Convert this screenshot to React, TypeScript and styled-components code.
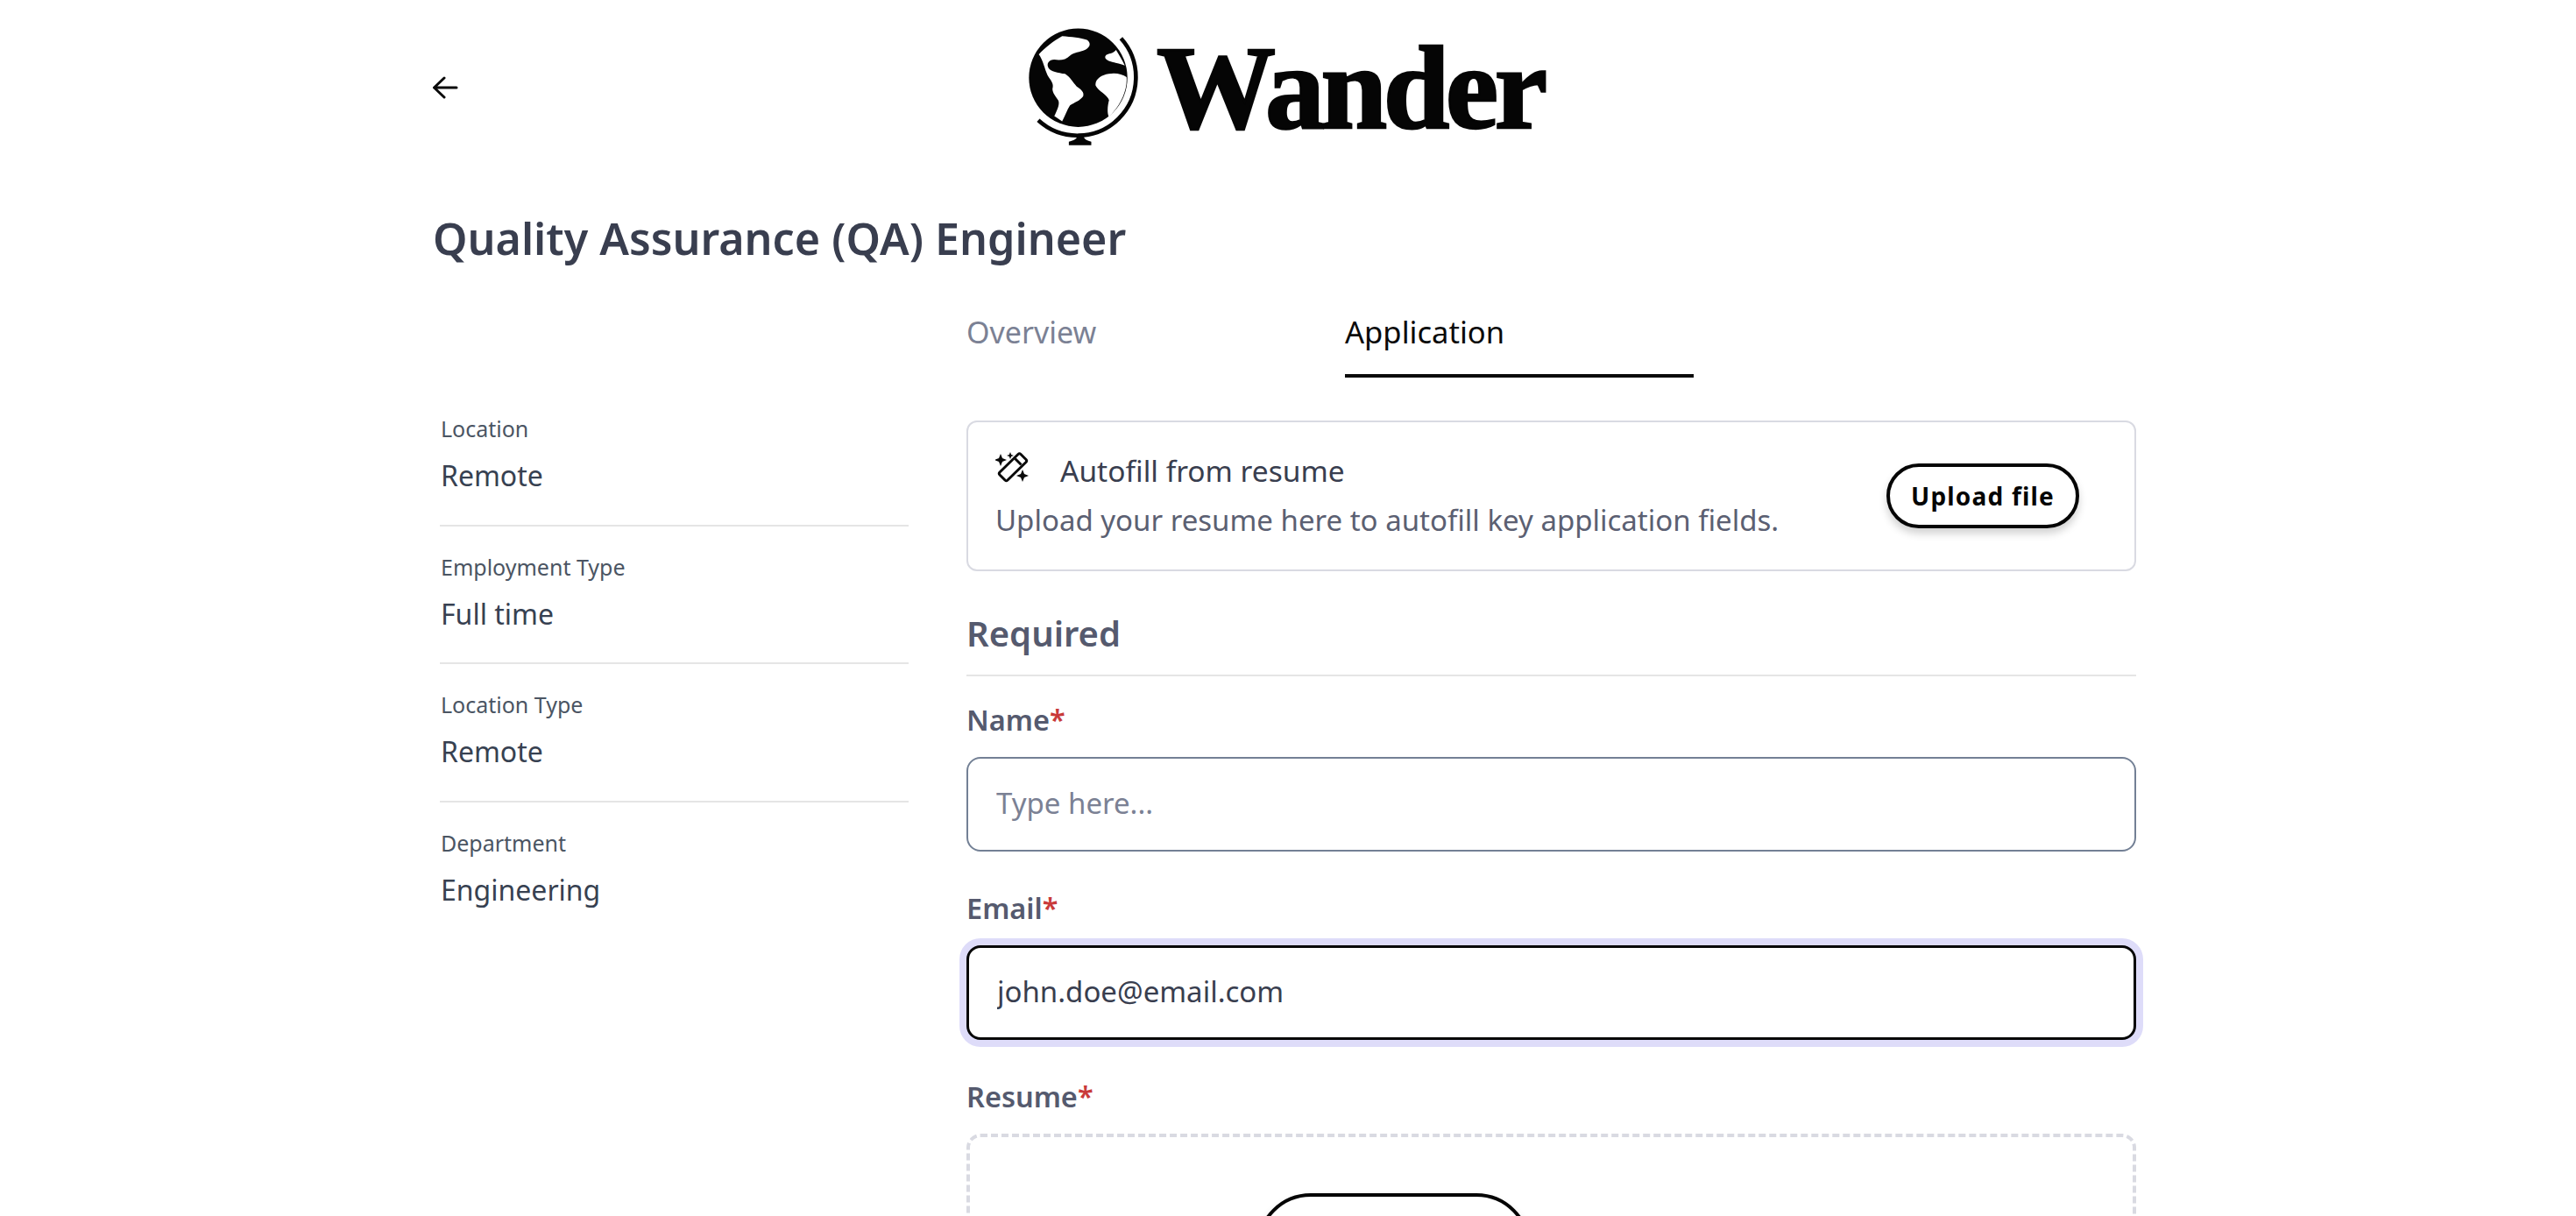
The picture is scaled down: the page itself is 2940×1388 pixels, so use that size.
import styled, { createGlobalStyle } from "styled-components";

const GlobalStyle = createGlobalStyle`
  html, body {
    margin: 0;
    height: 100%;
    overflow: hidden;
    background: #fff;
  }
  * {
    box-sizing: border-box;
  }
`;

const Globe = () => (
  <svg width="128" height="135" viewBox="70 38 385 405" fill="none">
    <circle cx="240" cy="208" r="169" fill="#050505" />
    <path
      d="M185 65 C215 68 250 70 270 78 C285 88 282 102 265 112 C245 120 225 122 212 132 C198 146 180 150 158 146 C140 146 130 160 138 174 C146 188 170 190 195 195 C212 205 222 225 235 238 C250 248 262 258 257 272 C245 288 228 292 212 303 C202 318 195 340 185 358 C176 352 168 346 158 340 C166 322 178 300 172 286 C160 268 148 256 153 240 C155 226 145 216 135 200 C125 178 120 150 105 128 C125 105 155 82 185 65 Z"
      fill="#fff"
    />
    <path
      d="M370 113 C380 130 392 148 400 166 C380 160 360 155 345 150 C335 146 330 140 334 133 C340 124 358 128 370 113 Z"
      fill="#fff"
    />
    <path
      d="M345 195 C368 190 392 196 406 206 C410 250 385 305 345 342 C338 325 342 300 346 285 C340 265 310 255 300 235 C296 215 320 198 345 195 Z"
      fill="#fff"
    />
    <path
      d="M387 73 A 200 200 0 0 1 103 354"
      stroke="#050505"
      strokeWidth="14"
    />
    <path
      d="M238 404 H258 C258 415 264 423 285 428 V440 H208 V428 C230 423 238 415 238 404 Z"
      fill="#050505"
    />
  </svg>
);

const BackArrow = () => (
  <svg width="30" height="26" viewBox="0 0 30 26" fill="none">
    <path
      d="M2.5 13 H28 M14 2 L2.5 13 L14 24"
      stroke="#0a0a0a"
      strokeWidth="3"
      strokeLinecap="round"
      strokeLinejoin="round"
    />
  </svg>
);

const WandIcon = () => (
  <WandSvg width="40" height="40" viewBox="0 0 40 40" fill="none">
    <path
      d="M29 2.5 L35 8.5 a2.2 2.2 0 0 1 0 3 L14 32 a2.2 2.2 0 0 1 -3 0 L5 26 a2.2 2.2 0 0 1 0 -3 L26 2.5 a2.2 2.2 0 0 1 3 0 Z"
      stroke="#0a0a0a"
      strokeWidth="3"
      strokeLinejoin="round"
    />
    <path d="M22.5 7.5 L29.5 14.5" stroke="#0a0a0a" strokeWidth="3" />
    <path
      d="M6 2 L8 7 L13 9 L8 11 L6 16 L4 11 L-1 9 L4 7 Z"
      fill="#0a0a0a"
    />
    <path
      d="M17 0 L18.2 3 L21 4 L18.2 5 L17 8 L15.8 5 L13 4 L15.8 3 Z"
      fill="#0a0a0a"
    />
    <path
      d="M31 20 L33 25 L38 27 L33 29 L31 34 L29 29 L24 27 L29 25 Z"
      fill="#0a0a0a"
    />
  </WandSvg>
);

const DETAILS = [
  { label: "Location", value: "Remote" },
  { label: "Employment Type", value: "Full time" },
  { label: "Location Type", value: "Remote" },
  { label: "Department", value: "Engineering" },
];

export default function App() {
  return (
    <Page>
      <GlobalStyle />
      <Header>
        <BackButton>
          <BackArrow />
        </BackButton>
        <Logo>
          <Globe />
          <Wordmark>Wander</Wordmark>
        </Logo>
      </Header>
      <Title>Quality Assurance (QA) Engineer</Title>
      <Columns>
        <Sidebar>
          {DETAILS.map((d) => (
            <Detail key={d.label}>
              <DetailLabel>{d.label}</DetailLabel>
              <DetailValue>{d.value}</DetailValue>
            </Detail>
          ))}
        </Sidebar>
        <Main>
          <Tabs>
            <Tab>Overview</Tab>
            <Tab $active>Application</Tab>
          </Tabs>
          <AutofillCard>
            <div>
              <AutofillTitle>
                <WandIcon />
                <span>Autofill from resume</span>
              </AutofillTitle>
              <AutofillText>
                Upload your resume here to autofill key application fields.
              </AutofillText>
            </div>
            <PillButton>Upload file</PillButton>
          </AutofillCard>
          <SectionTitle>Required</SectionTitle>
          <Field>
            <FieldLabel>
              Name<Star>*</Star>
            </FieldLabel>
            <TextInput placeholder="Type here..." readOnly />
          </Field>
          <Field>
            <FieldLabel>
              Email<Star>*</Star>
            </FieldLabel>
            <TextInput $focused value="john.doe@email.com" readOnly />
          </Field>
          <Field>
            <FieldLabel>
              Resume<Star>*</Star>
            </FieldLabel>
            <DropZone>
              <DropButton aria-label="Upload file" />
            </DropZone>
          </Field>
        </Main>
      </Columns>
    </Page>
  );
}

const FONT = `"Noto Sans", "Open Sans", sans-serif`;

const Page = styled.div`
  width: 1976px;
  margin: 0 auto;
  padding: 32px 0 0 12px;
  font-family: ${FONT};
  color: #374151;
  height: 1388px;
  overflow: hidden;
`;

const Header = styled.header`
  position: relative;
  display: flex;
  justify-content: center;
  height: 136px;
  padding-right: 10px;
`;

const BackButton = styled.button`
  position: absolute;
  left: -1px;
  top: 55px;
  display: flex;
  padding: 0;
  border: 0;
  background: none;
`;

const Logo = styled.div`
  display: flex;
  align-items: flex-start;
  gap: 18px;
`;

const Wordmark = styled.span`
  width: 448px;
  font-family: "Liberation Serif", serif;
  font-weight: 700;
  font-size: 136px;
  line-height: 136px;
  letter-spacing: -4.5px;
  color: #050505;
  -webkit-text-stroke: 2.5px #050505;
`;

const Title = styled.h1`
  margin: 70px 0 0;
  font-size: 50.2px;
  line-height: 68px;
  font-weight: 600;
  color: #393e4f;
`;

const Columns = styled.div`
  display: grid;
  grid-template-columns: 543px 1335px;
  column-gap: 66px;
  margin-top: 49px;
`;

const Sidebar = styled.aside`
  padding: 88px 0 0 8px;
`;

const Detail = styled.div`
  height: 157.5px;
  padding: 28px 0 0 1px;
  border-bottom: 2px solid #e5e5e5;
  &:last-child {
    border-bottom: 0;
  }
`;

const DetailLabel = styled.div`
  font-size: 25px;
  line-height: 36px;
  color: #4b5563;
`;

const DetailValue = styled.div`
  font-size: 32px;
  line-height: 48px;
  color: #374151;
  margin-top: 12px;
`;

const Main = styled.main`
  min-width: 0;
`;

const Tabs = styled.nav`
  display: flex;
  gap: 34px;
`;

const Tab = styled.div<{ $active?: boolean }>`
  width: 398px;
  height: 76px;
  font-size: ${(p) => (p.$active ? "34.6px" : "34px")};
  line-height: 48px;
  color: ${(p) => (p.$active ? "#0a0a0a" : "#7b8194")};
  border-bottom: ${(p) => (p.$active ? "4px solid #0a0a0a" : "0")};
`;

const AutofillCard = styled.section`
  display: flex;
  align-items: center;
  justify-content: space-between;
  height: 172px;
  margin-top: 49px;
  padding: 0 63px 0 31px;
  border: 2px solid #d9dae2;
  border-radius: 12px;
`;

const AutofillTitle = styled.div`
  display: flex;
  align-items: center;
  gap: 34px;
  font-size: 33.5px;
  line-height: 44px;
  color: #393e4f;
`;

const WandSvg = styled.svg`
  flex: none;
  margin-top: -2px;
`;

const AutofillText = styled.div`
  margin-top: 11px;
  font-size: 33px;
  line-height: 48px;
  color: #5b6072;
`;

const PillButton = styled.button`
  height: 74px;
  padding: 0 24px;
  border: 4px solid #050505;
  border-radius: 999px;
  background: #fff;
  box-shadow: 0 6px 10px rgba(0, 0, 0, 0.18);
  font-family: ${FONT};
  font-size: 28px;
  font-weight: 700;
  letter-spacing: 1.2px;
  color: #050505;
`;

const SectionTitle = styled.h2`
  margin: 42px 0 0;
  padding-bottom: 18px;
  font-size: 40px;
  line-height: 58px;
  font-weight: 600;
  color: #555a6e;
  border-bottom: 2px solid #e5e5e5;
`;

const Field = styled.div`
  margin-top: 28px;
  & + & {
    margin-top: 43px;
  }
`;

const FieldLabel = styled.div`
  font-size: 32.5px;
  line-height: 44px;
  font-weight: 600;
  color: #555a6e;
  margin-bottom: 20px;
`;

const Star = styled.span`
  color: #c93a3a;
`;

const TextInput = styled.input<{ $focused?: boolean }>`
  display: block;
  width: 100%;
  height: 108px;
  padding: 0 32px 3px;
  outline: 0;
  border-radius: 16px;
  font-family: ${FONT};
  font-size: 33px;
  color: #393e4f;
  border: ${(p) => (p.$focused ? "3px solid #050505" : "2px solid #738095")};
  box-shadow: ${(p) => (p.$focused ? "0 0 0 8px #dedcf9" : "none")};
  margin-bottom: ${(p) => (p.$focused ? "5px" : "0")};
  &::placeholder {
    color: #7b8194;
  }
`;

const DropZone = styled.div`
  display: flex;
  justify-content: center;
  height: 300px;
  padding: 64px 360px 0 0;
  border: 4px dashed #d9dae2;
  border-radius: 16px;
`;

const DropButton = styled(PillButton)`
  width: 313px;
  height: 124px;
`;
